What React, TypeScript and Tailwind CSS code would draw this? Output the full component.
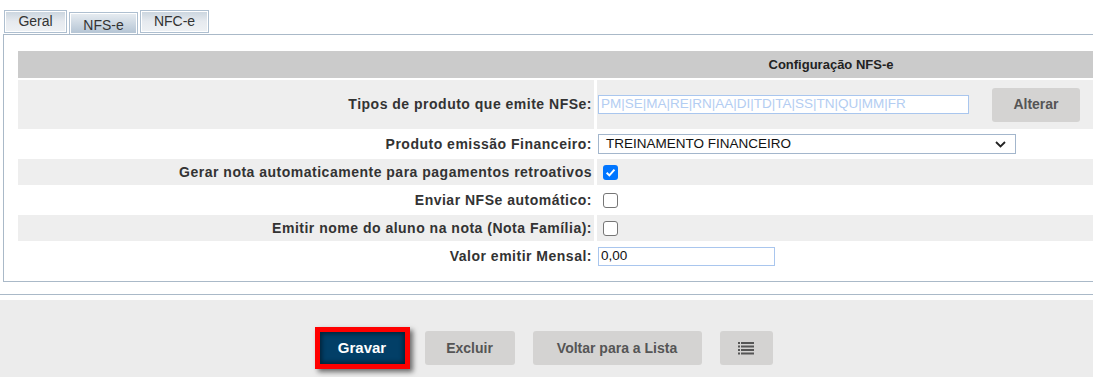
import React from "react";

const font = { fontFamily: '"Liberation Sans", Arial, sans-serif' };

function Tab({ label, active, w }: { label: string; active?: boolean; w: string }) {
  return (
    <div
      className={
        (active
          ? "mt-[2px] h-[22px] border border-b-0 border-[#aebfd0] bg-gradient-to-b from-[#e8edf2] to-[#b3c3d3] pt-[5px] "
          : "h-[23px] border border-[#aebfd0] bg-gradient-to-b from-[#c9d4de] via-[#e6eaef] to-[#eef1f4] pt-[3px] ") +
        "text-center text-[14px] leading-[15px] text-[#333] shadow-[inset_0_0_0_1px_#ffffff] " +
        w
      }
    >
      {label}
    </div>
  );
}

function Label({ children, gray }: { children: React.ReactNode; gray?: boolean }) {
  return (
    <div
      className={
        "flex items-center justify-end pr-[2px] text-[14px] font-bold tracking-[0.5px] text-[#333] " +
        (gray ? "bg-[#eeeeee]" : "")
      }
    >
      {children}
    </div>
  );
}

function Checkbox({ checked }: { checked?: boolean }) {
  if (checked) {
    return (
      <span className="ml-[6px] flex h-[15px] w-[15px] items-center justify-center rounded-[3px] bg-[#0075ff]">
        <svg width="11" height="11" viewBox="0 0 10 10">
          <path d="M1.5 5.2 L4 7.6 L8.6 2.4" fill="none" stroke="#fff" strokeWidth="1.8" />
        </svg>
      </span>
    );
  }
  return <span className="ml-[6px] h-[15px] w-[15px] rounded-[3px] border border-[#767676] bg-white" />;
}

function GrayButton({ children, w }: { children: React.ReactNode; w: string }) {
  return (
    <button
      className={
        "flex h-[34px] items-center justify-center rounded-[3px] bg-[#d4d3d2] text-[14px] font-bold text-[#555] " + w
      }
    >
      {children}
    </button>
  );
}

export default function App() {
  return (
    <div className="h-[377px] w-[1093px] overflow-hidden bg-white" style={font}>
      <div className="pl-[3px] pt-[10px]">
        <div className="flex items-start gap-[2px] pl-[1px]">
          <Tab label="Geral" w="w-[63px]" />
          <Tab label="NFS-e" active w="w-[69px]" />
          <Tab label="NFC-e" w="w-[69px]" />
        </div>
        <div className="w-[1670px] border border-[#aab9c8] px-[14px] pb-[12px] pt-[16px]">
          <div className="grid w-[1626px] grid-cols-[576px_1fr] gap-x-[3px] gap-y-[2px]">
            <div className="col-span-2 flex h-[27px] items-center justify-center bg-[#cbcbcb] text-[13px] font-bold text-[#222]">
              Configuração NFS-e
            </div>

            <Label gray>Tipos de produto que emite NFSe:</Label>
            <div className="flex h-[49px] items-center bg-[#eeeeee] pl-[1px]">
              <div className="flex h-[19px] w-[371px] items-center border border-[#a9c6ee] bg-white px-[2px] text-[13.5px] text-[#b3cdf2]">
                PM|SE|MA|RE|RN|AA|DI|TD|TA|SS|TN|QU|MM|FR
              </div>
              <div className="ml-[23px]">
                <GrayButton w="w-[88px]">Alterar</GrayButton>
              </div>
            </div>

            <Label>Produto emissão Financeiro:</Label>
            <div className="flex h-[26px] items-center pl-[1px]">
              <div className="flex h-[20px] w-[418px] items-center justify-between border border-[#a3b6cc] bg-white pl-[7px] pr-[9px] text-[13.5px] text-[#111]">
                <span>TREINAMENTO FINANCEIRO</span>
                <svg width="11" height="7" viewBox="0 0 11 7">
                  <path d="M1 1 L5.5 5.5 L10 1" fill="none" stroke="#222" strokeWidth="1.8" />
                </svg>
              </div>
            </div>

            <Label gray>Gerar nota automaticamente para pagamentos retroativos</Label>
            <div className="flex h-[26px] items-center bg-[#eeeeee]">
              <Checkbox checked />
            </div>

            <Label>Enviar NFSe automático:</Label>
            <div className="flex h-[26px] items-center">
              <Checkbox />
            </div>

            <Label gray>Emitir nome do aluno na nota (Nota Família):</Label>
            <div className="flex h-[26px] items-center bg-[#eeeeee]">
              <Checkbox />
            </div>

            <Label>Valor emitir Mensal:</Label>
            <div className="flex h-[26px] items-center pl-[1px]">
              <div className="flex h-[19px] w-[177px] items-center border border-[#a9c6ee] bg-white px-[2px] text-[13.5px] text-[#111]">
                0,00
              </div>
            </div>
          </div>
        </div>
      </div>

      <div className="mt-[12px] border-t border-[#aab9c8]" />
      <div className="mt-[5px] flex h-[80px] items-start justify-center bg-[#ececec] pr-[6px] pt-[27px]">
        <div className="flex items-center">
          <div className="border-[5px] border-[#ff0000] shadow-[3px_3px_5px_rgba(0,0,0,0.55)]">
            <button className="flex h-[32px] w-[85px] items-center justify-center bg-[#023f67] text-[15px] font-bold text-white shadow-[inset_0_0_4px_2px_rgba(0,0,0,0.45)]">
              Gravar
            </button>
          </div>
          <div className="ml-[15px] flex gap-[18px]">
            <GrayButton w="w-[90px]">Excluir</GrayButton>
            <GrayButton w="w-[169px]">Voltar para a Lista</GrayButton>
            <GrayButton w="w-[53px]">
              <svg width="16" height="13" viewBox="0 0 16 13">
                <g fill="#555">
                  <rect x="0" y="0" width="2" height="2" />
                  <rect x="3" y="0" width="13" height="2" />
                  <rect x="0" y="3.5" width="2" height="2" />
                  <rect x="3" y="3.5" width="13" height="2" />
                  <rect x="0" y="7" width="2" height="2" />
                  <rect x="3" y="7" width="13" height="2" />
                  <rect x="0" y="10.5" width="2" height="2" />
                  <rect x="3" y="10.5" width="13" height="2" />
                </g>
              </svg>
            </GrayButton>
          </div>
        </div>
      </div>
    </div>
  );
}
